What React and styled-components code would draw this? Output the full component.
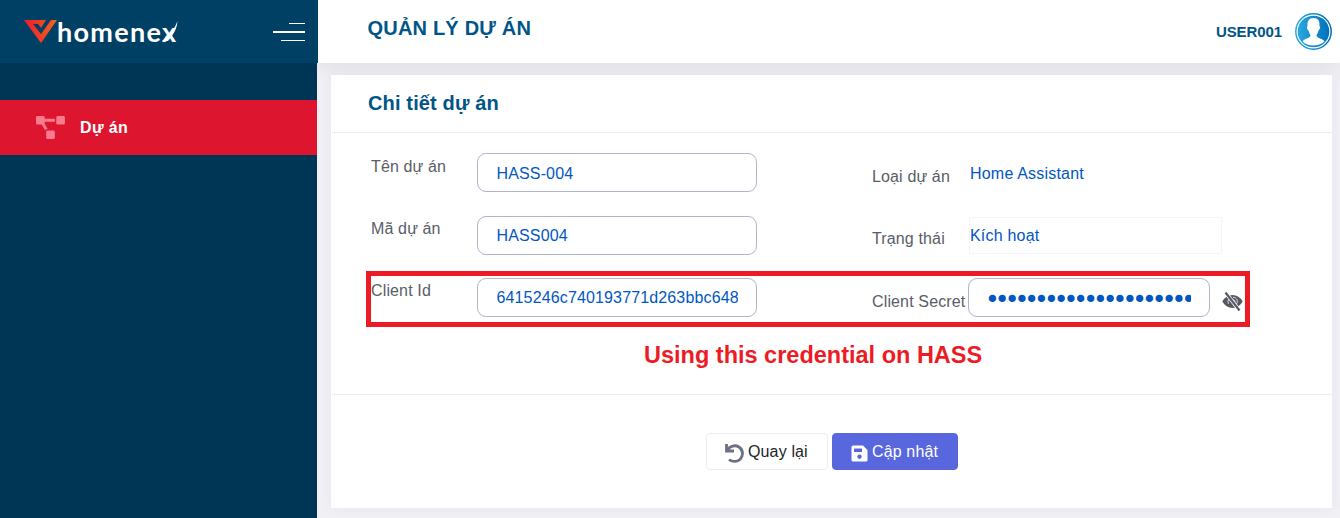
import React from "react";
import styled, { createGlobalStyle } from "styled-components";
import { FaProjectDiagram } from "react-icons/fa";

const Global = createGlobalStyle`
  * { box-sizing: border-box; }
  body { margin: 0; background: #f0f0f5; overflow: hidden; font-family: "Liberation Sans", Arial, sans-serif; font-size: 16px; letter-spacing: 0.14px; color: #595d66; }
  input, button { font: inherit; letter-spacing: inherit; }
`;
const Page = styled.div`
  display: grid;
  grid-template: 63px 455px / 317px 1023px;
  width: 1340px;
  height: 518px;
  overflow: hidden;
`;
const Brand = styled.div`
  display: flex;
  align-items: flex-start;
  width: 318px;
  padding: 19px 13px 0 24px;
  background: #004065;
  z-index: 3;
`;
const BrandName = styled.span`
  margin: -6px 0 0 -1px;
  font: 700 27px/38px Lato, sans-serif;
  letter-spacing: 1.3px;
  color: #fff;
`;
const Swoosh = styled.svg`
  flex: none;
  margin: 2px 0 0 -15px;
`;
const Burger = styled.div`
  display: flex;
  flex-direction: column;
  align-items: flex-end;
  gap: 7px;
  margin: 4px 0 0 auto;
`;
const Bar = styled.i`
  width: ${(p) => p.$w}px;
  height: ${(p) => p.$h || 1}px;
  background: #fff;
`;
const Header = styled.header`
  display: flex;
  justify-content: space-between;
  padding: 0 8px 0 50.5px;
  background: #fff;
  box-shadow: 0 0 24px rgba(69, 70, 80, 0.14);
  z-index: 0;
`;
const Title = styled.h1`
  margin: 0;
  font-size: 20px;
  line-height: 56px;
  letter-spacing: 0.2px;
  color: #005586;
`;
const User = styled.div`
  display: flex;
  align-items: center;
  gap: 13px;
  font-size: 15px;
  font-weight: 700;
  letter-spacing: -0.1px;
  color: #005586;
`;
const Sidebar = styled.nav`
  padding-top: 37px;
  background: #003655;
  z-index: 1;
`;
const NavItem = styled.div`
  display: flex;
  align-items: center;
  gap: 15px;
  height: 55px;
  padding-left: 36px;
  background: #dd152f;
  color: #fff;
  font-weight: 700;
  letter-spacing: 0.35px;
  svg { color: #f97b8d; }
`;
const Main = styled.main`
  padding: 12px 8px 10px 14px;
`;
const Card = styled.section`
  position: relative;
  height: 433px;
  background: #fff;
  box-shadow: 0 0 13px rgba(82, 63, 105, 0.05);
`;
const CardHead = styled.h2`
  height: 58px;
  margin: 0 0 0 1px;
  padding-left: 36px;
  border-bottom: 1px solid #ebedf2;
  font-size: 20px;
  line-height: 57px;
  letter-spacing: 0.14px;
  color: #005586;
`;
const Form = styled.div`
  display: grid;
  grid-template-columns: 106px 395px 96px 1fr;
  grid-template-rows: 63px 62px 62px;
  height: 262px;
  margin-left: 1px;
  padding: 20px 0 0 39px;
  border-bottom: 1px solid #ebedf2;
`;
const Label = styled.label`
  padding-top: ${(p) => p.$top}px;
  line-height: 20px;
  white-space: nowrap;
`;
const Field = styled.input`
  display: block;
  width: ${(p) => p.$w}px;
  height: 39px;
  padding: ${(p) => p.$drop || 0}px 18.5px 0;
  border: 1px solid #afb5c9;
  border-radius: 9px;
  background: #fff;
  color: #0057c2;
  outline: 0;
`;
const SecretField = styled(Field)`
  font-family: "DejaVu Sans", sans-serif;
  font-size: 25px;
  letter-spacing: -4.93px;
  padding-left: 16px;
`;
const Value = styled.div`
  width: 253px;
  height: 37px;
  margin: ${(p) => p.$top || 0}px 0 0 0.5px;
  padding-left: 0.5px;
  border: 1px solid ${(p) => (p.$boxed ? "#f5f5f7" : "transparent")};
  line-height: 36px;
  letter-spacing: 0.2px;
  color: #0057c2;
`;
const Secret = styled.div`
  display: flex;
  gap: 12px;
  svg { margin-top: 14px; flex: none; }
`;
const Outline = styled.div`
  position: absolute;
  left: 35px;
  top: 196px;
  width: 884px;
  height: 56px;
  border: 5px solid #ed1c24;
`;
const Note = styled.p`
  position: absolute;
  left: 313px;
  top: 266px;
  margin: 0;
  font-size: 23.5px;
  font-weight: 700;
  line-height: 28px;
  letter-spacing: 0;
  white-space: nowrap;
  color: #ed1c24;
`;
const Actions = styled.div`
  display: flex;
  gap: 4px;
  padding: 38px 0 0 375px;
`;
const Button = styled.button`
  display: flex;
  align-items: center;
  gap: 4px;
  width: ${(p) => p.$w}px;
  height: 37px;
  padding: 0 0 0 18px;
  border: 1px solid ${(p) => (p.$primary ? "#5867dd" : "#ebedf2")};
  border-radius: 4px;
  background: ${(p) => (p.$primary ? "#5867dd" : "#fff")};
  color: ${(p) => (p.$primary ? "#fff" : "#212529")};
  white-space: nowrap;
  svg { margin-top: 3px; }
`;

const Mark = () => (
  <svg width="34" height="24" viewBox="0 0 34 24">
    <defs>
      <linearGradient id="mark">
        <stop offset="0" stopColor="#ed1c2c" />
        <stop offset="1" stopColor="#f2641c" />
      </linearGradient>
    </defs>
    <path fill="url(#mark)" fillRule="evenodd" d="M0 1H22L17 9L14 5H9L17 15L27 1H33L17 24Z" />
  </svg>
);
const Avatar = () => (
  <svg width="37" height="37" viewBox="0 0 37 37">
    <defs>
      <linearGradient id="av">
        <stop offset="0" stopColor="#29a9e0" />
        <stop offset="1" stopColor="#0071bc" />
      </linearGradient>
    </defs>
    <circle cx="18.5" cy="18.5" r="17.7" fill="#fff" stroke="url(#av)" strokeWidth="1.5" />
    <circle cx="18.5" cy="18.5" r="15.8" fill="url(#av)" />
    <path fill="#fff" d="M18.500 5C14 5 12 8 12.500 13C11.500 14 12.300 17 13.500 17.500C14 20 15 21 15.500 22C15.500 24.500 13 25 10.500 26Q8 27 7.500 28.500Q12 32.500 18.500 32.500T29.500 28.500Q29 27 26.500 26C24 25 21.500 24.500 21.500 22C22 21 23 20 23.500 17.500C24.700 17 25.500 14 24.500 13C25 8 23 5 18.500 5Z" />
  </svg>
);
const Back = () => (
  <svg width="19" height="19" viewBox="0 0 19 19" fill="none" stroke="#6c7080" strokeWidth="2.8">
    <path d="M1.500 0V7H9M2 6C5 2 10 .5 14 3C18.500 6 18.500 12 15 15.500C12 18 7 18 4 15.500" />
  </svg>
);
const Save = () => (
  <svg width="17" height="17" viewBox="0 0 17 17">
    <path fill="#fff" fillRule="evenodd" d="M2 .5H12L16.500 5V15Q16.500 16.500 15 16.500H2Q.5 16.500 .5 15V2Q.5 .5 2 .5ZM3 3.500V7H11V3.500ZM8.500 9.500A2.200 2.200 0 1 0 8.510 9.500Z" />
  </svg>
);
const EyeOff = () => (
  <svg width="21" height="19" viewBox="0 0 21 19" fill="none">
    <path d="M.3 9.500Q4 3 10.500 3T20.700 9.500Q17 16 10.500 16T.3 9.500Z" fill="#575962" />
    <path d="M11 5.300C13.500 5 15.800 7.500 15.200 10.500C14.500 12.500 13 13.500 11 13.700M6.500 7.500Q5.300 9.500 6.500 11.800M11.500 7.500Q13.500 8.500 12.800 10.500" stroke="#fff" strokeWidth=".8" />
    <path d="M3.500 .5L17.500 18.500" stroke="#fff" strokeWidth="3.700" />
    <path d="M3.500 .5L17.500 18.500" stroke="#575962" strokeWidth="2.200" />
  </svg>
);

export default function App() {
  return (
    <Page>
      <Global />
      <Brand>
        <Mark />
        <BrandName>homenex</BrandName>
        <Swoosh width="16" height="22" viewBox="0 0 16 22"><path d="M15.500 0Q15 10 6 20L0 20Q12 11 15.500 0Z" fill="#fff" /></Swoosh>
        <Burger><Bar $w={16} /><Bar $w={32} $h={2} /><Bar $w={24} /></Burger>
      </Brand>
      <Header>
        <Title>QUẢN LÝ DỰ ÁN</Title>
        <User>USER001<Avatar /></User>
      </Header>
      <Sidebar>
        <NavItem><FaProjectDiagram size={29} />Dự án</NavItem>
      </Sidebar>
      <Main>
        <Card>
          <CardHead>Chi tiết dự án</CardHead>
          <Form>
            <Label $top={4}>Tên dự án</Label>
            <Field $w={280} $drop={2} readOnly value="HASS-004" />
            <Label $top={14}>Loại dự án</Label>
            <Value $top={2}>Home Assistant</Value>
            <Label $top={3}>Mã dự án</Label>
            <Field $w={280} readOnly value="HASS004" />
            <Label $top={13}>Trạng thái</Label>
            <Value $boxed $top={1}>Kích hoạt</Value>
            <Label $top={3}>Client Id</Label>
            <Field $w={280} readOnly value="6415246c740193771d263bbc648" />
            <Label $top={14}>Client Secret</Label>
            <Secret>
              <SecretField $w={242} $drop={4} type="password" readOnly value="6415246c740193771d263bbc648" />
              <EyeOff />
            </Secret>
          </Form>
          <Actions>
            <Button $w={122}><Back />Quay lại</Button>
            <Button $w={126} $primary><Save />Cập nhật</Button>
          </Actions>
          <Outline />
          <Note>Using this credential on HASS</Note>
        </Card>
      </Main>
    </Page>
  );
}
